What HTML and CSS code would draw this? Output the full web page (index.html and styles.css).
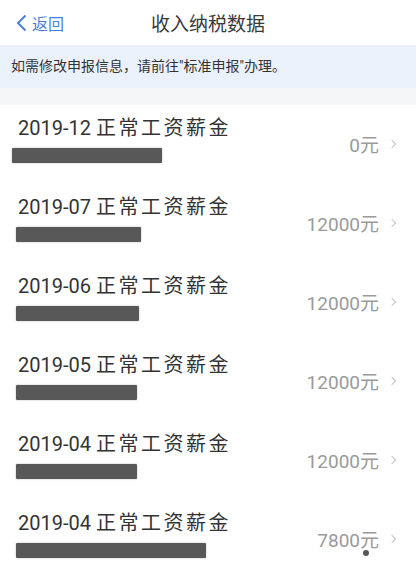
FILE: index.html
```html
<!DOCTYPE html>
<html>
	<head>
		<meta charset="utf-8">
		<title>收入纳税数据</title>
		<link rel="stylesheet" href="styles.css">
	</head>
	<body>
		<div class="nav">
			<a href="javascript:;" class="back">
				<svg width="11" height="18" viewBox="0 0 11 18"><polyline points="9.5,1.5 2,9 9.5,16.5" fill="none" stroke="#4a80d9" stroke-width="2"/></svg>
				<span>返回</span>
			</a>
			<h1 class="title">收入纳税数据</h1>
			<span></span>
		</div>
		<p class="tip">如需修改申报信息，请前往"标准申报"办理。</p>
		<div class="gap"></div>
		<ul class="list">
			<li class="item">
				<div class="info">
					<p class="name">2019-12 <span class="kind">正常工资薪金</span></p>
					<i class="mask mask-first" style="width:150px"></i>
				</div>
				<span class="money">0元</span>
				<span class="arrow"></span>
			</li>
			<li class="item">
				<div class="info">
					<p class="name">2019-07 <span class="kind">正常工资薪金</span></p>
					<i class="mask" style="width:125px"></i>
				</div>
				<span class="money">12000元</span>
				<span class="arrow"></span>
			</li>
			<li class="item">
				<div class="info">
					<p class="name">2019-06 <span class="kind">正常工资薪金</span></p>
					<i class="mask" style="width:123px"></i>
				</div>
				<span class="money">12000元</span>
				<span class="arrow"></span>
			</li>
			<li class="item">
				<div class="info">
					<p class="name">2019-05 <span class="kind">正常工资薪金</span></p>
					<i class="mask" style="width:121px"></i>
				</div>
				<span class="money">12000元</span>
				<span class="arrow"></span>
			</li>
			<li class="item">
				<div class="info">
					<p class="name">2019-04 <span class="kind">正常工资薪金</span></p>
					<i class="mask" style="width:121px"></i>
				</div>
				<span class="money">12000元</span>
				<span class="arrow"></span>
			</li>
			<li class="item">
				<div class="info">
					<p class="name">2019-04 <span class="kind">正常工资薪金</span></p>
					<i class="mask" style="width:190px"></i>
				</div>
				<span class="money">7800元</span>
				<span class="arrow"></span>
				<b class="dot"></b>
			</li>
		</ul>
	</body>
</html>
```

FILE: styles.css
```css
*{
	margin: 0;
	padding: 0;
	font-family: Roboto, "Noto Sans CJK SC", sans-serif;
}
body{
	width: 416px;
	background: #fff;
	color: #333;
}
.nav{
	height: 45px;
	display: grid;
	grid-template-columns: 1fr auto 1fr;
	align-items: center;
}
.back{
	display: flex;
	align-items: center;
	gap: 5px;
	padding-left: 16px;
	color: #4a80d9;
	font-size: 16px;
	text-decoration: none;
}
.title{
	font-size: 19px;
	font-weight: normal;
	color: #3a3a3a;
}
.tip{
	height: 43px;
	line-height: 43px;
	padding-left: 11px;
	background: #eaf1fb;
	font-size: 14px;
	color: #333;
}
.gap{
	height: 17px;
	background: #f5f6f8;
}
.list{
	list-style: none;
}
.item{
	position: relative;
	height: 79px;
	display: flex;
	align-items: center;
	padding: 0 19px 0 18px;
	box-sizing: border-box;
}
.info{
	flex: 1;
	align-self: flex-start;
	padding-top: 10px;
}
.name{
	font-size: 20px;
	line-height: 26px;
	color: #333;
	white-space: nowrap;
}
.kind{
	letter-spacing: 2.5px;
}
.mask{
	display: block;
	height: 15px;
	margin-top: 7px;
	margin-left: -2px;
	background: #585858;
	border-radius: 1px;
	box-shadow: 0 0 2px rgba(0,0,0,0.3);
}
.mask-first{
	margin-left: -6px;
}
.money{
	font-size: 19px;
	color: #9a9a9a;
	margin-top: -3px;
}
.arrow{
	width: 5px;
	height: 5px;
	margin-left: 10px;
	margin-right: 2px;
	margin-top: -1px;
	border-top: 1.5px solid #c4c4c4;
	border-right: 1.5px solid #c4c4c4;
	transform: rotate(45deg);
}
.dot{
	position: absolute;
	left: 363px;
	top: 50px;
	width: 6px;
	height: 6px;
	border-radius: 50%;
	background: #555;
}
```
